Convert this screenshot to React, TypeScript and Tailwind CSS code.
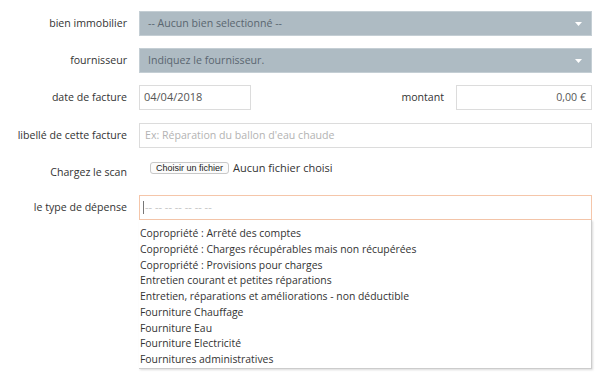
import React from "react";

const items = [
  "Copropriété : Arrêté des comptes",
  "Copropriété : Charges récupérables mais non récupérées",
  "Copropriété : Provisions pour charges",
  "Entretien courant et petites réparations",
  "Entretien, réparations et améliorations - non déductible",
  "Fourniture Chauffage",
  "Fourniture Eau",
  "Fourniture Electricité",
  "Fournitures administratives",
];

function Label({ children }: { children: React.ReactNode }) {
  return (
    <div className="w-[127px] shrink-0 text-right text-[10.6px] text-[#333333] leading-[25px]">
      {children}
    </div>
  );
}

function Arrow() {
  return (
    <svg width="7" height="4" viewBox="0 0 7 4" className="shrink-0">
      <path d="M0 0 L7 0 L3.5 4 Z" fill="#ffffff" />
    </svg>
  );
}

export default function App() {
  return (
    <div
      className="w-[600px] h-[377px] bg-white overflow-hidden pt-[11px]"
      style={{ fontFamily: '"Open Sans", sans-serif' }}
    >
      <div className="flex flex-col">
        <div className="flex items-center gap-[12px]">
          <Label>bien immobilier</Label>
          <div className="w-[453px] h-[25px] bg-[#aebbc3] border border-[#c4ced4] flex items-center justify-between pl-[8px] pr-[9px] text-[10.6px] text-[#5a6670]">
            <span>-- Aucun bien selectionné --</span>
            <Arrow />
          </div>
        </div>
        <div className="flex items-center gap-[12px] mt-[12px]">
          <Label>fournisseur</Label>
          <div className="w-[453px] h-[25px] bg-[#aebbc3] border border-[#c4ced4] flex items-center justify-between pl-[8px] pr-[9px] text-[10.6px] text-[#5a6670]">
            <span>Indiquez le fournisseur.</span>
            <Arrow />
          </div>
        </div>
        <div className="flex items-center mt-[12px]">
          <div className="flex items-center gap-[12px]">
            <Label>date de facture</Label>
            <div className="w-[112px] h-[25px] border border-[#dcdcdc] flex items-center px-[4px] text-[11px] text-[#555555]">
              04/04/2018
            </div>
          </div>
          <div className="ml-auto mr-[8px] flex items-center gap-[12px]">
            <div className="text-[10.6px] text-[#333333]">montant</div>
            <div className="w-[136px] h-[25px] border border-[#dcdcdc] flex items-center justify-end px-[5px] text-[10.6px] text-[#555555]">
              0,00 €
            </div>
          </div>
        </div>
        <div className="flex items-center gap-[12px] mt-[13px]">
          <Label>libellé de cette facture</Label>
          <div className="w-[453px] h-[25px] border border-[#dcdcdc] flex items-center px-[5px] text-[10.6px] text-[#b3b3b3]">
            Ex: Réparation du ballon d'eau chaude
          </div>
        </div>
        <div className="flex items-start gap-[12px] mt-[12px]">
          <Label>Chargez le scan</Label>
          <div className="flex items-center pl-[11px] pt-[2px]">
            <div
              className="h-[12px] px-[5px] border border-[#c8c8c8] rounded-[3px] bg-[#fbfbfb] text-[9px] leading-[10px] text-[#222222] flex items-center"
              style={{ fontFamily: '"Liberation Sans", Arial, sans-serif' }}
            >
              Choisir un fichier
            </div>
            <span className="ml-[4px] text-[11px] text-[#333333] leading-[12px]">
              Aucun fichier choisi
            </span>
          </div>
        </div>
        <div className="flex items-start gap-[12px] mt-[10px]">
          <Label>le type de dépense</Label>
          <div className="w-[453px] flex flex-col">
            <div className="h-[25px] border border-[#f5c6aa] flex items-center pl-[3px] text-[11px] text-[#c4c4c4]">
              <span className="w-px h-[13px] bg-[#777777] mr-[1px]"></span>
              <span>-- -- -- -- -- -- --</span>
            </div>
            <div className="h-[149px] border-r border-b border-[#cccccc] shadow-[1px_1px_2px_rgba(0,0,0,0.15)] pt-[6px] pl-[1px]">
              {items.map((t) => (
                <div key={t} className="text-[10.4px] leading-[15.75px] text-[#333333] whitespace-nowrap">
                  {t}
                </div>
              ))}
            </div>
          </div>
        </div>
      </div>
    </div>
  );
}
